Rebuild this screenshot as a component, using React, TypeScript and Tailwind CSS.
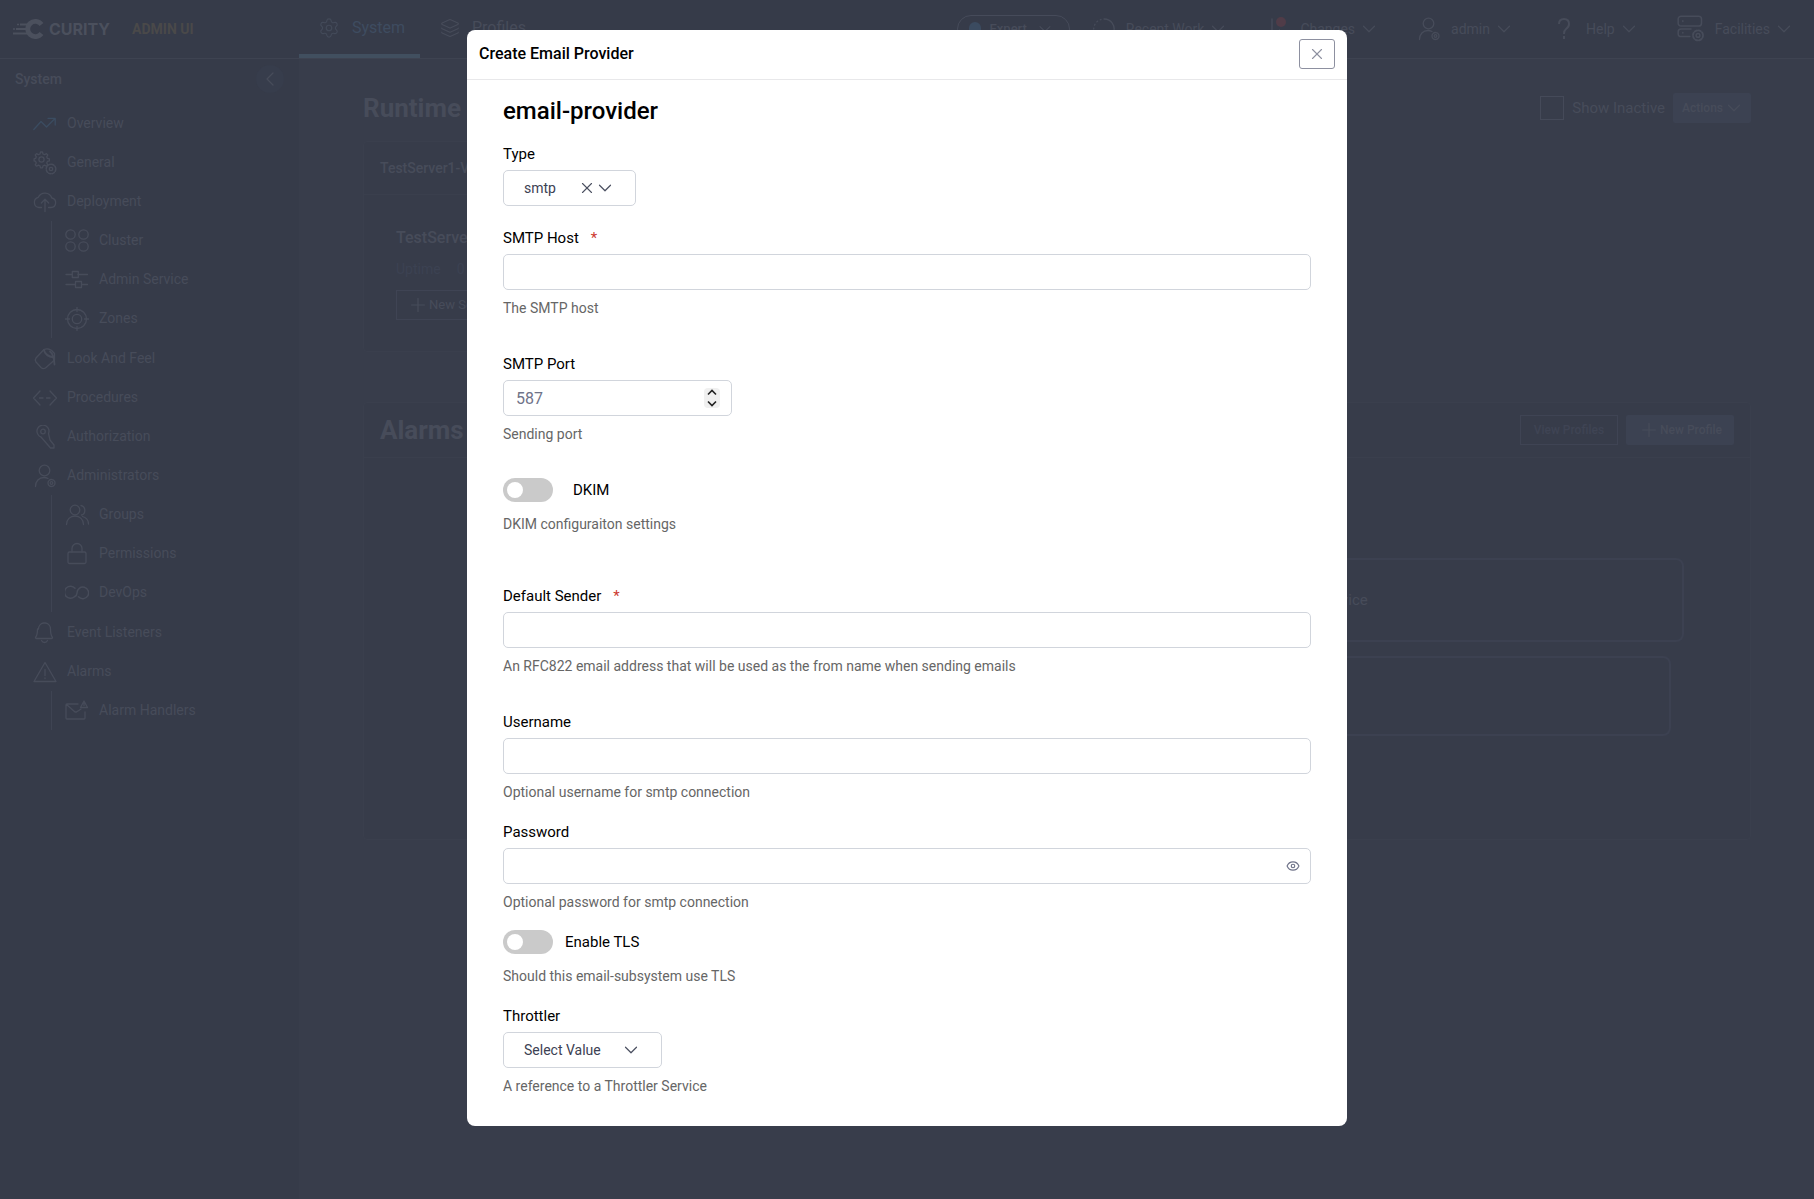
import React from 'react';
import { ChevronDown, ChevronLeft, Eye, Layers, Plus, Settings, X } from 'lucide-react';

interface IconProps {
  className?: string;
}

const Svg: React.FC<IconProps & { children: React.ReactNode }> = ({ className, children }) => (
  <svg viewBox="0 0 24 24" fill="none" stroke="currentColor" strokeWidth="1.3" strokeLinecap="round" strokeLinejoin="round" className={className} aria-hidden="true">
    {children}
  </svg>
);

const TrendIcon: React.FC<IconProps> = ({ className }) => (
  <Svg className={className}>
    <path d="M.8 17.500 8 9.500l5.500 5.500L22 6.500M15 6.300h7.200v6.700" />
  </Svg>
);

const GearsIcon: React.FC<IconProps> = ({ className }) => (
  <Svg className={className}>
    <circle cx="8.500" cy="8.500" r="2.600" />
    <path d="M7.500 1h2l.5 2 1.600.7 1.800-1.100 1.400 1.400-1.100 1.800.7 1.600 2 .5v2l-2 .5-.7 1.600 1.100 1.800-1.400 1.400-1.800-1.100-1.600.7-.5 2h-2l-.5-2-1.600-.7-1.800 1.100-1.400-1.400 1.100-1.800-.7-1.600-1.500-.5v-2l1.500-.5.7-1.600L2.200 4 3.600 2.600l1.800 1.100L7 3z" />
    <circle cx="18" cy="18" r="1.700" />
    <circle cx="18" cy="18" r="4.800" strokeDasharray="2.400 1.370" strokeWidth="1.500" />
  </Svg>
);

const CloudIcon: React.FC<IconProps> = ({ className }) => (
  <Svg className={className}>
    <path d="M8.500 17.500H6A5.200 5.200 0 0 1 5.300 7.300a7.300 7.300 0 0 1 13.500.7 4.800 4.800 0 0 1-.8 9.500h-2.500M12 21.500V9.500M8.300 13 12 9.300l3.700 3.700" />
  </Svg>
);

const ClusterIcon: React.FC<IconProps> = ({ className }) => (
  <Svg className={className}>
    <circle cx="5.500" cy="5.500" r="4.700" />
    <circle cx="18.500" cy="5.500" r="4.700" />
    <circle cx="5.500" cy="17.500" r="4.700" />
    <circle cx="18.500" cy="17.500" r="4.700" />
  </Svg>
);

const SlidersIcon: React.FC<IconProps> = ({ className }) => (
  <Svg className={className}>
    <path d="M1 6.500h6M13 6.500h9.500M1 16.500h9M16.500 16.500h6" />
    <rect x="7.300" y="3.500" width="6" height="6" />
    <rect x="10.500" y="13.500" width="6" height="6" />
  </Svg>
);

const TargetIcon: React.FC<IconProps> = ({ className }) => (
  <Svg className={className}>
    <circle cx="12" cy="12" r="9.500" />
    <circle cx="12" cy="12" r="4.700" />
    <path d="M12 .5v4M12 19.500v4M.5 12h4M19.500 12h4" />
  </Svg>
);

const PaintIcon: React.FC<IconProps> = ({ className }) => (
  <Svg className={className}>
    <path d="M11 2.500 3 11q-1.500 2 0 4l5 5.500q2 1.800 4.500.500l9-8V6.500q-3-4-6-4.500-2.500-.5-4.500.5z" />
    <path d="M11 3q1 6 10 7.500M17 4.500q4 3 4.500 13" strokeWidth="1.800" />
  </Svg>
);

const CodeIcon: React.FC<IconProps> = ({ className }) => (
  <Svg className={className}>
    <path d="m7 5-6.500 7L7 19M17 5l6.500 7L17 19M6.500 12h3.500M13.500 12H17" />
  </Svg>
);

const KeyIcon: React.FC<IconProps> = ({ className }) => (
  <Svg className={className}>
    <circle cx="10" cy="6.500" r="2.300" />
    <path d="M5 9.500a6 6 0 1 1 10.500-1L17 15l4 5v3h-3.500L8 12q-2-.5-3-2.500z" />
  </Svg>
);

const AdminIcon: React.FC<IconProps> = ({ className }) => (
  <Svg className={className}>
    <circle cx="11.500" cy="6.500" r="5.300" />
    <path d="M2.500 22.500C2.500 17 6 13.500 11 13.500q2 0 4 1" />
    <circle cx="18.500" cy="19" r="1.300" />
    <circle cx="18.500" cy="19" r="3.500" strokeDasharray="2 .75" />
  </Svg>
);

const GroupIcon: React.FC<IconProps> = ({ className }) => (
  <Svg className={className}>
    <circle cx="10" cy="7" r="4.800" />
    <path d="M1.500 21.500c0-5 3.700-8.500 8.500-8.500s8.500 3.500 8.500 8.500M16 2.500c5 1 5 8.500.5 9.500M17.500 13.500c3.500 1 6 3.500 6 7.500" />
  </Svg>
);

const LockIcon: React.FC<IconProps> = ({ className }) => (
  <Svg className={className}>
    <rect x="3" y="10" width="18" height="11.500" rx="1.500" />
    <path d="M7 10V6.500a5 5 0 0 1 10 0V10" />
  </Svg>
);

const DevOpsIcon: React.FC<IconProps> = ({ className }) => (
  <Svg className={className}>
    <path d="M9.500 15.700A6 6 0 1 1 10 7.300M12 12a5.800 5.800 0 1 1 1.500 3.800M12 12q0 2.500-2.500 3.700" strokeWidth="1.500" />
  </Svg>
);

const BellIcon: React.FC<IconProps> = ({ className }) => (
  <Svg className={className}>
    <path d="M5.500 8a6 6 0 0 1 5-6h2a6 6 0 0 1 5 6q0 6 2 8.500 0 1-1 1h-15q-1 0-1-1 2-2.500 2-8.500zM8.500 19.500q1 2 3 2t3-2" />
  </Svg>
);

const AlertIcon: React.FC<IconProps> = ({ className }) => (
  <Svg className={className}>
    <path d="M12 2.500 23 21.500H1zM12 9.500v6M12 18v.5" />
  </Svg>
);

const MailAlertIcon: React.FC<IconProps> = ({ className }) => (
  <Svg className={className}>
    <path d="M13 5H2q-1 0-1 1v13q0 1 1 1h17q1 0 1-1v-6M1.500 5.500l8.500 7.500h1.500L16 10" />
    <path d="M19 2 15.500 8.500h7zM19 4.500v2" />
  </Svg>
);

const ServerGearIcon: React.FC<IconProps> = ({ className }) => (
  <Svg className={className}>
    <rect x="1" y="1" width="20" height="8.500" rx="2.500" />
    <path d="M11 18.500H3.500Q1 18.500 1 16v-1.500Q1 12 3.500 12H12M5 5v.5M5 15v.5" />
    <circle cx="18" cy="17.500" r="1.600" />
    <circle cx="18" cy="17.500" r="4.300" strokeDasharray="2 1.370" strokeWidth="1.600" />
  </Svg>
);

const Logo: React.FC = () => (
  <svg viewBox="0 0 31 20" className="h-5 w-[31px]" fill="none" stroke="currentColor" aria-hidden="true">
    <path d="M28.500 5.500A7.600 7.600 0 1 0 28.500 14.500" strokeWidth="4.800" />
    <path d="M7 5.500h8M3 10h12M0 14.500h15" strokeWidth="2" />
    <path d="M0 10h2M4 5.500h2" strokeWidth="1.500" />
  </svg>
);

interface MenuItem {
  label: string;
  icon: React.ElementType;
  active?: boolean;
  children?: MenuItem[];
}

const menu: MenuItem[] = [
  { label: 'Overview', icon: TrendIcon, active: true },
  { label: 'General', icon: GearsIcon },
  {
    label: 'Deployment',
    icon: CloudIcon,
    children: [
      { label: 'Cluster', icon: ClusterIcon },
      { label: 'Admin Service', icon: SlidersIcon },
      { label: 'Zones', icon: TargetIcon },
    ],
  },
  { label: 'Look And Feel', icon: PaintIcon },
  { label: 'Procedures', icon: CodeIcon },
  { label: 'Authorization', icon: KeyIcon },
  {
    label: 'Administrators',
    icon: AdminIcon,
    children: [
      { label: 'Groups', icon: GroupIcon },
      { label: 'Permissions', icon: LockIcon },
      { label: 'DevOps', icon: DevOpsIcon },
    ],
  },
  { label: 'Event Listeners', icon: BellIcon },
  { label: 'Alarms', icon: AlertIcon, children: [{ label: 'Alarm Handlers', icon: MailAlertIcon }] },
];

const MenuLink: React.FC<{ item: MenuItem }> = ({ item }) => {
  const Icon = item.icon;
  return (
    <a href="#" className="flex h-[39px] items-center gap-[10px]">
      <Icon className={item.active ? 'size-6 text-[#3b4c61]' : 'size-6'} />
      <span>{item.label}</span>
    </a>
  );
};

const Sidebar: React.FC = () => (
  <aside className="w-[299px] shrink-0 bg-[#363b49]">
    <div className="flex h-10 items-center justify-between px-[15px] text-[14px] font-medium">
      <span>System</span>
      <button aria-label="Collapse menu" className="flex size-7 items-center justify-center rounded-full bg-[#373d4c]">
        <ChevronLeft className="size-6" strokeWidth={1.3} />
      </button>
    </div>
    <ul className="pt-[5px] pl-[33px] text-[14px]">
      {menu.map(item => (
        <li key={item.label}>
          <MenuLink item={item} />
          {item.children && (
            <ul className="mb-px ml-[18px] border-l border-[#3f4453] pl-[13px]">
              {item.children.map(child => (
                <li key={child.label}>
                  <MenuLink item={child} />
                </li>
              ))}
            </ul>
          )}
        </li>
      ))}
    </ul>
  </aside>
);

const HeaderMenu: React.FC<{ label: string; children: React.ReactNode }> = ({ label, children }) => (
  <button className="flex items-center gap-[10px]">
    {children}
    <span className="flex items-center gap-[3px]">
      {label}
      <ChevronDown className="size-[22px]" strokeWidth={1.3} />
    </span>
  </button>
);

const Header: React.FC = () => (
  <header className="flex h-[59px] items-center border-b border-[#3e4351] bg-[#363b49] pr-[19px] text-[14px]">
    <div className="flex w-[299px] shrink-0 items-center pl-[13px] text-[#4b505d]">
      <Logo />
      <span className="ml-[5px] font-[Inter,sans-serif] text-[16px] font-bold">CURITY</span>
      <span className="ml-[22px] text-[14px] font-bold text-[#4a4949]">ADMIN UI</span>
    </div>
    <nav className="flex h-full text-[16px]">
      <a href="#" className="flex h-full w-[121px] items-center gap-3 border-b-4 border-[#414f5f] pt-[2px] pl-[19px] text-[#3e4c60]">
        <Settings className="size-[22px] text-[#434a59]" strokeWidth={1.3} />
        System
      </a>
      <a href="#" className="flex h-full items-center gap-3 pb-[2px] pl-5">
        <Layers className="size-5" strokeWidth={1.3} />
        Profiles
      </a>
    </nav>
    <div className="ml-auto flex items-center">
      <button className="mr-[22px] flex h-7 w-[113px] items-center gap-2 rounded-full border border-[#464b5a] pr-[14px] pl-[11px] text-[13px] font-medium">
        <span className="size-[14px] rounded-full bg-[#3b4b60]" />
        Expert
        <ChevronDown className="ml-auto size-[22px]" strokeWidth={1.3} />
      </button>
      <div className="flex items-center gap-[37px]">
        <HeaderMenu label="Recent Work">
          <Svg className="size-6">
            <path d="M12 2a10 10 0 1 1-7 17" />
            <path d="M2.500 16A10 10 0 0 1 9 2.500" strokeDasharray="1 3" />
          </Svg>
        </HeaderMenu>
        <HeaderMenu label="Changes">
          <span className="relative">
            <Svg className="size-6">
              <path d="M6 2v20M13.500 13v9" />
            </Svg>
            <span className="absolute top-0 right-1 size-[10px] rounded-full bg-[#503c48]" />
          </span>
        </HeaderMenu>
        <HeaderMenu label="admin">
          <AdminIcon className="size-6" />
        </HeaderMenu>
        <HeaderMenu label="Help">
          <svg viewBox="0 0 24 24" className="size-6" fill="none" stroke="currentColor" strokeWidth="2" aria-hidden="true">
            <path d="M7 7q0-5 5-5t5 5q0 3-3 5-2 1.500-2 5M12 19v3" />
          </svg>
        </HeaderMenu>
        <HeaderMenu label="Facilities">
          <ServerGearIcon className="size-7" />
        </HeaderMenu>
      </div>
    </div>
  </header>
);

const Dashboard: React.FC = () => (
  <main className="flex-1 bg-[#383d4b] pt-[33px] pr-[63px] pl-16">
    <div className="flex h-8 items-center justify-between">
      <h1 className="text-[26px] font-bold">Runtime</h1>
      <div className="flex items-center gap-2">
        <label className="flex items-center gap-2 text-[15px]">
          <input type="checkbox" className="size-6 appearance-none border border-[#454a59]" />
          Show Inactive
        </label>
        <button className="flex h-[30px] items-center rounded-[2px] bg-[#3c4252] pr-[6px] pl-[9px] text-[12px] font-medium">
          Actions
          <ChevronDown className="size-[22px]" strokeWidth={1.3} />
        </button>
      </div>
    </div>

    <section className="mt-[17px] h-[211px] w-1/2 rounded border border-[#3a3f4d] bg-[#373c4a]">
      <h2 className="flex h-[53px] items-center border-b border-[#3a3f4d] pl-4 text-[14px] font-medium">TestServer1-Ve</h2>
      <div className="pt-[29px] pl-8">
        <h3 className="text-[16px] leading-7 font-medium">TestServer</h3>
        <p className="flex h-[34px] items-center gap-4 text-[14px] text-[#3c4252]">
          <span>Uptime</span>
          <span>0</span>
        </p>
        <button className="mt-1 flex h-[30px] items-center border border-[#3f4454] px-[10px] text-[13px]">
          <Plus className="size-[22px]" strokeWidth={1.3} />
          New Server
        </button>
      </div>
    </section>

    <section className="mt-[50px] rounded border border-[#3a3f4d] bg-[#373c4a]">
      <div className="flex h-[55px] items-center border-b border-[#3a3f4d] px-4 text-[12px] font-medium">
        <h2 className="mr-auto text-[26px] font-bold">Alarms</h2>
        <button className="mr-2 h-[30px] border border-[#3f4454] px-[13px] text-[#3f4454]">View Profiles</button>
        <button className="flex h-[30px] items-center rounded-[2px] bg-[#3c4252] px-3">
          <Plus className="size-[22px]" strokeWidth={1.3} />
          New Profile
        </button>
      </div>
      <div className="flex h-[381px] flex-col items-end gap-[14px] pt-[100px] pr-[66px]">
        <div className="flex h-[84px] w-[500px] items-center rounded-lg border-2 border-[#3c4151] pl-[133px] text-[15px]">Service</div>
        <div className="mr-[13px] h-20 w-[487px] rounded-lg border-2 border-[#3c4151]" />
      </div>
    </section>
  </main>
);

const inputClass = 'block h-9 w-full rounded-[5px] border border-[#d1d5dc] bg-white px-3 text-[16px] text-black outline-none';
const selectClass = 'h-9 appearance-none rounded-[5px] border border-[#d1d5dc] bg-white pl-5 text-[14px] text-[#3c4153] outline-none';

interface FieldProps {
  id: string;
  label: string;
  help?: string;
  required?: boolean;
  className?: string;
  children?: React.ReactNode;
}

const Field: React.FC<FieldProps> = ({ id, label, help, required, className, children }) => (
  <div className={className}>
    <label htmlFor={id} className="mb-[6px] flex gap-3 text-[15px] leading-5 text-black">
      {label}
      {required && <span className="text-[#cc3a30]">*</span>}
    </label>
    {children ?? <input id={id} type="text" className={inputClass} />}
    {help && <p className="mt-2 text-[14px] leading-5 text-[#666]">{help}</p>}
  </div>
);

interface ToggleProps {
  id: string;
  label: string;
  help: string;
  className?: string;
  gap: string;
}

const Toggle: React.FC<ToggleProps> = ({ id, label, help, className, gap }) => (
  <div className={className}>
    <div className={`flex items-center ${gap}`}>
      <input
        id={id}
        type="checkbox"
        role="switch"
        className="flex h-6 w-[50px] appearance-none items-center rounded-full bg-[#cacaca] px-1 before:size-4 before:rounded-full before:bg-white checked:justify-end"
      />
      <label htmlFor={id} className="text-[15px] leading-5 text-black">{label}</label>
    </div>
    <p className="mt-3 text-[14px] leading-5 text-[#666]">{help}</p>
  </div>
);

const EmailProviderDialog: React.FC = () => (
  <div role="dialog" aria-label="Create Email Provider" className="w-[880px] rounded-lg bg-white pb-[30px] text-black">
    <div className="flex h-[50px] items-center justify-between border-b border-[#e8e8ea] px-3 pb-[2px]">
      <h2 className="text-[16px] font-medium">Create Email Provider</h2>
      <button aria-label="Close" className="flex h-[30px] w-9 items-center justify-center rounded-[3px] border border-[#8d90a0] text-[#8d90a0]">
        <X className="size-[18px]" strokeWidth={1.5} />
      </button>
    </div>
    <form className="px-9 pt-[15px]">
      <h3 className="text-[24px] leading-8 font-medium">email-provider</h3>

      <Field id="type" label="Type" className="mt-[17px]">
        <div className="relative w-[133px]">
          <select id="type" className={`${selectClass} w-full`}>
            <option>smtp</option>
          </select>
          <button type="button" aria-label="Clear type" className="absolute top-[9px] left-[75px] text-[#4a4f60]">
            <X className="size-[18px]" strokeWidth={1.5} />
          </button>
          <ChevronDown className="pointer-events-none absolute top-[7px] left-[91px] size-[22px] text-[#4a4f60]" strokeWidth={1.3} />
        </div>
      </Field>

      <Field id="host" label="SMTP Host" help="The SMTP host" required className="mt-[22px]" />

      <Field id="port" label="SMTP Port" help="Sending port" className="mt-9">
        <div className="relative w-[229px]">
          <input
            id="port"
            type="number"
            placeholder="587"
            className={`${inputClass} [appearance:textfield] placeholder:text-[#6f7389]`}
          />
          <div className="absolute top-2 right-3 flex h-5 w-4 flex-col items-center justify-between rounded bg-[#f0f0f0] text-[#222]">
            <button type="button" aria-label="Increase">
              <svg viewBox="0 0 16 9" className="h-[9px] w-4" fill="none" stroke="currentColor" strokeWidth="1.600">
                <path d="m4 6.500 4-4 4 4" />
              </svg>
            </button>
            <button type="button" aria-label="Decrease">
              <svg viewBox="0 0 16 9" className="h-[9px] w-4" fill="none" stroke="currentColor" strokeWidth="1.600">
                <path d="m4 2.500 4 4 4-4" />
              </svg>
            </button>
          </div>
        </div>
      </Field>

      <Toggle id="dkim" label="DKIM" help="DKIM configuraiton settings" gap="gap-5" className="mt-[34px]" />

      <Field
        id="sender"
        label="Default Sender"
        help="An RFC822 email address that will be used as the from name when sending emails"
        required
        className="mt-[52px]"
      />
      <Field id="username" label="Username" help="Optional username for smtp connection" className="mt-9" />

      <Field id="password" label="Password" help="Optional password for smtp connection" className="mt-5">
        <div className="relative">
          <input id="password" type="password" className={inputClass} />
          <button type="button" aria-label="Show password" className="absolute top-[11px] right-[11px] text-[#6f7389]">
            <Eye className="size-[14px]" strokeWidth={2} />
          </button>
        </div>
      </Field>

      <Toggle id="tls" label="Enable TLS" help="Should this email-subsystem use TLS" gap="gap-3" className="mt-[18px]" />

      <Field id="throttler" label="Throttler" help="A reference to a Throttler Service" className="mt-5">
        <div className="relative w-[159px]">
          <select id="throttler" className={`${selectClass} w-full`}>
            <option>Select Value</option>
          </select>
          <ChevronDown className="pointer-events-none absolute top-[7px] right-5 size-[22px] text-[#4a4f60]" strokeWidth={1.3} />
        </div>
      </Field>
    </form>
  </div>
);

const App: React.FC = () => (
  <div className="flex min-h-screen flex-col bg-[#383d4b] font-[Roboto,sans-serif] text-[#474c5a]">
    <Header />
    <div className="flex flex-1">
      <Sidebar />
      <Dashboard />
    </div>
    <div className="absolute inset-x-0 top-0 flex justify-center pt-[30px]">
      <EmailProviderDialog />
    </div>
  </div>
);

export default App;
